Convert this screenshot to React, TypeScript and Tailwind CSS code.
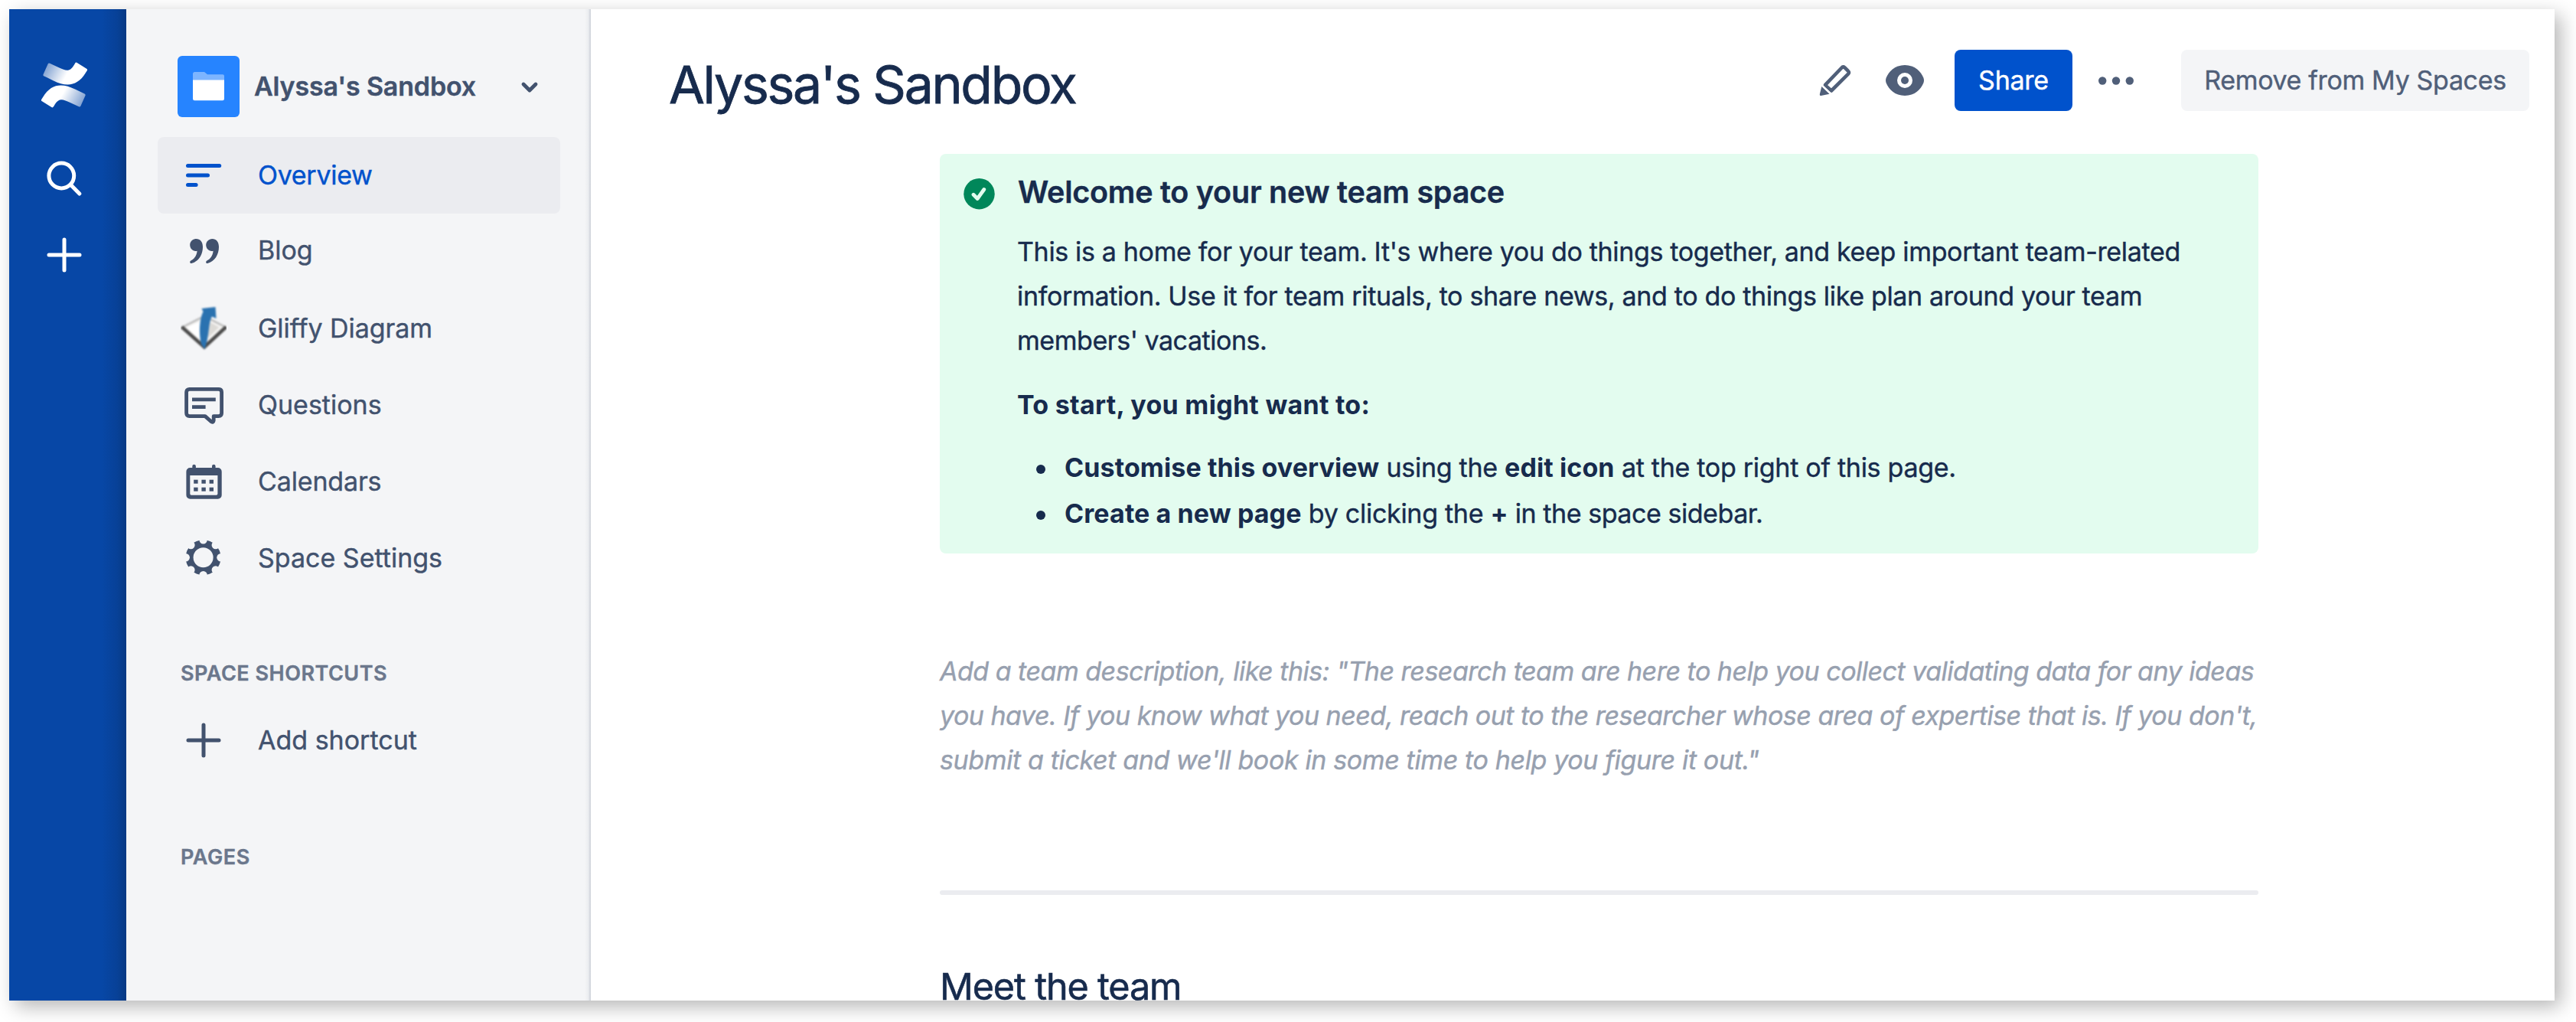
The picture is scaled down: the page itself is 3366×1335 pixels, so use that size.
import type { ReactNode } from "react";

function ConfluenceLogo() {
  return (
    <svg className="h-[60px] w-[60px]" viewBox="0 0 24 24">
      <defs>
        <linearGradient id="logo-low" gradientUnits="userSpaceOnUse" x1="23" y1="21" x2="12" y2="15">
          <stop offset="0" stopColor="#fff" stopOpacity="0.45" />
          <stop offset="1" stopColor="#fff" />
        </linearGradient>
        <linearGradient id="logo-high" gradientUnits="userSpaceOnUse" x1="1" y1="3" x2="12" y2="9">
          <stop offset="0" stopColor="#fff" stopOpacity="0.45" />
          <stop offset="1" stopColor="#fff" />
        </linearGradient>
      </defs>
      <path
        fill="url(#logo-low)"
        d="M.87 18.257c-.248.382-.53.875-.763 1.245a.764.764 0 0 0 .255 1.04l4.965 3.054a.764.764 0 0 0 1.058-.26c.199-.332.454-.763.733-1.221 1.967-3.247 3.945-2.853 7.508-1.146l4.957 2.337a.764.764 0 0 0 1.028-.382l2.364-5.346a.764.764 0 0 0-.382-1 599.851 599.851 0 0 1-4.965-2.361C10.911 10.97 5.224 11.185.87 18.257z"
      />
      <path
        fill="url(#logo-high)"
        d="M23.131 5.743c.249-.405.531-.875.764-1.25a.764.764 0 0 0-.256-1.034L18.675.404a.764.764 0 0 0-1.058.26c-.195.335-.451.763-.734 1.225-1.966 3.246-3.945 2.85-7.508 1.146L4.437.694a.764.764 0 0 0-1.027.382L1.046 6.422a.764.764 0 0 0 .382 1c1.039.49 3.105 1.467 4.965 2.361 6.698 3.246 12.392 3.029 16.738-4.04z"
      />
    </svg>
  );
}

function SearchIcon() {
  return (
    <svg className="h-[60px] w-[60px]" viewBox="0 0 60 60" fill="none" stroke="#fff" strokeWidth="5" strokeLinecap="round">
      <circle cx="26.3" cy="26.5" r="16.4" />
      <path d="M38.5 38.5 49.8 50" />
    </svg>
  );
}

function PlusIcon() {
  return (
    <svg className="h-[60px] w-[60px]" viewBox="0 0 60 60" fill="none" stroke="currentColor" strokeWidth="5" strokeLinecap="round">
      <path d="M30 10v40M10 30h40" />
    </svg>
  );
}

function OverviewIcon() {
  return (
    <svg className="h-[60px] w-[60px]" viewBox="0 0 60 60" fill="#0052CC">
      <rect x="7" y="15" width="46.2" height="5" rx="2.5" />
      <rect x="7" y="27.5" width="31" height="5" rx="2.5" />
      <rect x="7" y="40" width="15.6" height="5" rx="2.5" />
    </svg>
  );
}

function QuoteIcon() {
  const mark =
    "M20.4 15c-4.7 0-8.2 3.7-8.2 8.1 0 4.4 3.3 7.8 7.5 7.8.7 0 1.3-.1 1.9-.2-.6 6-3.4 10.6-8.3 12.7-1.8.9-1.3 3.9.9 3.6C23.6 44.6 29 35.6 29 25.5 29 19 25.4 15 20.4 15z";
  return (
    <svg className="h-[60px] w-[60px]" viewBox="0 0 60 60" fill="#42526E">
      <path d={mark} />
      <path d={mark} transform="translate(21 0)" />
    </svg>
  );
}

function GliffyIcon() {
  return (
    <svg className="h-[60px] w-[60px]" viewBox="0 0 60 60" fill="none">
      <g className="blur-[1.3px]">
        <path d="M2 28.5 31 14 59 28.5 31 54z" fill="#f3f2f0" stroke="#bdbdbd" strokeWidth="2.5" />
        <path d="M35 20 50 28.5 36 42z" fill="#dcdad6" />
        <path d="M1.5 28 31 54.5 59.5 28" stroke="#4b4b4b" strokeWidth="4.5" />
        <path d="M8 28.5 26 45V21z" fill="#fff" />
        <path d="M27.5 4 45.5 2 46.5 17 41 14.5C36 22 38 40 31.5 57L27 51C23.500 36 24.5 18 29.5 8z" fill="#2a72b0" />
      </g>
    </svg>
  );
}

function QuestionsIcon() {
  return (
    <svg className="h-[60px] w-[60px]" viewBox="0 0 60 60" fill="none" stroke="#42526E" strokeWidth="4.8" strokeLinejoin="round">
      <path d="M11.6 9.4H49.6Q53.6 9.4 53.6 13.4V40.6Q53.6 44.6 49.6 44.6H43.2V50.5Q42.8 53.4 40 51.7L32 44.6H11.6Q7.6 44.6 7.6 40.6V13.4Q7.6 9.4 11.6 9.4z" />
      <path d="M15 22.9h30.8M15 32.7h17.6" />
    </svg>
  );
}

function CalendarIcon() {
  return (
    <svg className="h-[60px] w-[60px]" viewBox="0 0 60 60" fill="#42526E">
      <rect x="15.3" y="7.7" width="4.6" height="12" rx="2.3" />
      <rect x="41" y="7.7" width="4.6" height="12" rx="2.3" />
      <path
        fillRule="evenodd"
        d="M12.4 12H48.7a5 5 0 0 1 5 5V47.7a5 5 0 0 1-5 5H12.4a5 5 0 0 1-5-5V17a5 5 0 0 1 5-5zM12.3 22V46a1.7 1.7 0 0 0 1.7 1.7H46.7a1.7 1.7 0 0 0 1.7-1.7V22z"
      />
      {[17.2, 27.4, 37.6].map((x) =>
        [27.7, 37.7].map((y) => <rect key={`${x}-${y}`} x={x} y={y} width="5.4" height="5" />),
      )}
    </svg>
  );
}

function GearIcon() {
  return (
    <svg className="h-[60px] w-[60px]" viewBox="0 0 60 60">
      <mask id="gear-mask">
        <circle cx="29.6" cy="29.2" r="23" fill="#fff" />
        <circle cx="29.6" cy="29.2" r="13" fill="#000" />
        {[0, 45, 90, 135, 180, 225, 270, 315].map((a) => (
          <circle key={a} cx="29.6" cy="6.3" r="5.2" fill="#000" transform={`rotate(${a} 29.6 29.2)`} />
        ))}
      </mask>
      <rect width="60" height="60" fill="#42526E" mask="url(#gear-mask)" />
    </svg>
  );
}

function NavItem({ icon, label, className = "" }: { icon: ReactNode; label: string; className?: string }) {
  return (
    <div className={`flex h-[100px] items-center gap-[41px] rounded-lg pl-[30px] ${className}`}>
      {icon}
      <span className="whitespace-nowrap">{label}</span>
    </div>
  );
}

function Sidebar() {
  return (
    <aside className="flex w-[607px] shrink-0 flex-col bg-[#F4F5F7] bg-[linear-gradient(to_left,rgba(9,30,66,0.16)_0,rgba(9,30,66,0.10)_2px,rgba(9,30,66,0.04)_3px,transparent_8px)] pr-10 pl-[41px] text-[34px] leading-[40px] text-[#42526E]">
      <div className="mt-[61px] flex h-20 items-center pl-[26px]">
        <div className="flex h-20 w-[81px] items-center justify-center rounded-md bg-[#2684FF]">
          <svg className="h-[38px] w-[41px]" viewBox="0 0 41 38">
            <path d="M2.5 0H15L19 3.3H39A2 2 0 0 1 41 5.3V14H0V2.5A2.5 2.5 0 0 1 2.5 0z" fill="#7DB5FF" />
            <path d="M0 10.5H41V35a2.2 2.2 0 0 1-2.2 2.2H2.2A2.2 2.2 0 0 1 0 35z" fill="#fff" />
          </svg>
        </div>
        <span className="ml-[19px] font-semibold tracking-[-0.17px] whitespace-nowrap">Alyssa's Sandbox</span>
        <svg className="mt-[2px] ml-[58px] h-6 w-6" viewBox="0 0 24 24" fill="none" stroke="#42526E" strokeWidth="4.8" strokeLinecap="round" strokeLinejoin="round">
          <path d="M4 8 12 16 20 8" />
        </svg>
      </div>
      <nav className="mt-[26px] flex flex-col">
        <NavItem icon={<OverviewIcon />} label="Overview" className="bg-[#EBECF0] tracking-[-0.3px] text-[#0052CC]" />
        <NavItem icon={<QuoteIcon />} label="Blog" className="-mt-[2px] mb-[2px]" />
        <NavItem icon={<GliffyIcon />} label="Gliffy Diagram" className="tracking-[-0.05px]" />
        <NavItem icon={<QuestionsIcon />} label="Questions" />
        <NavItem icon={<CalendarIcon />} label="Calendars" className="tracking-[-0.15px]" />
        <NavItem icon={<GearIcon />} label="Space Settings" />
      </nav>
      <h2 className="mt-[81px] pl-[30px] text-[27px] font-semibold tracking-[0.5px] text-[#6B778C]">SPACE SHORTCUTS</h2>
      <NavItem icon={<PlusIcon />} label="Add shortcut" className="mt-[17px]" />
      <h2 className="mt-[83px] pl-[30px] text-[27px] font-semibold tracking-[0.6px] text-[#6B778C]">PAGES</h2>
    </aside>
  );
}

function Header() {
  return (
    <header className="flex h-[186px] items-center justify-between pr-[33px] pl-[102px]">
      <h1 className="mt-[9px] text-[68px] leading-[80px] tracking-[-2.33px] whitespace-nowrap [-webkit-text-stroke:0.8px]">Alyssa's Sandbox</h1>
      <div className="flex items-center text-[34px] text-[#505F79]">
        <svg className="h-[42px] w-[42px]" viewBox="0 0 42 42" fill="none">
          <path d="M7.8 27.2 29.5 4.5Q31.3 2.4 33.3 4.2L37.8 8.7Q40 10.7 38 12.7L16 34.500z" stroke="#505F79" strokeWidth="4.6" strokeLinejoin="round" />
          <path d="M3.3 29 13.5 38.7 2.5 41Q.5 41.5.8 39z" fill="#505F79" />
          <path d="M4 27.5 15.5 38.5" stroke="#fff" strokeWidth="2" />
        </svg>
        <svg className="ml-[45px] h-10 w-[50px]" viewBox="0 0 50 40" fill="#505F79">
          <path d="M25 0C38 0 46 8.5 49.3 16.5Q50.7 20 49.3 23.5C46 31.5 38 40 25 40S4 31.5.7 23.5Q-.7 20 .7 16.5C4 8.5 12 0 25 0z" />
          <circle cx="25" cy="20" r="10" fill="#fff" />
          <circle cx="25" cy="20" r="5" />
        </svg>
        <button className="ml-10 h-20 w-[154px] rounded-lg bg-[#0052CC] pb-[2px] tracking-[-0.24px] text-white">Share</button>
        <svg className="ml-[34px] h-[11px] w-[46px]" viewBox="0 0 46 11" fill="#505F79">
          <circle cx="5.2" cy="5.5" r="5.2" />
          <circle cx="23" cy="5.5" r="5.2" />
          <circle cx="40.8" cy="5.5" r="5.2" />
        </svg>
        <button className="ml-[62px] h-20 w-[455px] rounded-lg bg-[#F4F5F7] pb-[2px] tracking-[-0.35px]">Remove from My Spaces</button>
      </div>
    </header>
  );
}

function Bold({ children }: { children: ReactNode }) {
  return <b className="font-bold tracking-[0.1px] [-webkit-text-stroke:0]">{children}</b>;
}

function Bullet({ children }: { children: ReactNode }) {
  return (
    <li className="flex h-[58px] items-center">
      <span className="mt-1 mr-[25px] ml-[25px] h-3 w-3 rounded-full bg-[#172B4D]" />
      <span className="tracking-[-0.28px] whitespace-pre">{children}</span>
    </li>
  );
}

function WelcomePanel() {
  return (
    <section className="flex h-[522px] gap-[29px] rounded-lg bg-[#E3FCEF] pt-[25px] pl-[31px]">
      <svg className="mt-[7px] h-[41px] w-[41px]" viewBox="0 0 41 41">
        <circle cx="20.5" cy="20.2" r="20.2" fill="#00875A" />
        <path d="M13 21.2 18.2 26.5 26.8 14.5" fill="none" stroke="#E3FCEF" strokeWidth="4.8" strokeLinecap="round" strokeLinejoin="round" />
      </svg>
      <div className="text-[34px] leading-[58px]">
        <h3 className="pl-px text-[39.5px] leading-[50px] font-semibold tracking-[-0.24px] whitespace-nowrap">Welcome to your new team space</h3>
        <p className="mt-6 tracking-[-0.335px] whitespace-nowrap">
          This is a home for your team. It's where you do things together, and keep important team-related
          <br />
          information. Use it for team rituals, to share news, and to do things like plan around your team
          <br />
          <span className="tracking-[-0.45px]">members' vacations.</span>
        </p>
        <p className="mt-[26px] font-bold tracking-[0.27px] [-webkit-text-stroke:0]">To start, you might want to:</p>
        <ul className="mt-6 flex flex-col gap-[2px]">
          <Bullet>
            <Bold>Customise this overview</Bold> using the <Bold>edit icon</Bold> at the top right of this page.
          </Bullet>
          <Bullet>
            <Bold>Create a new page</Bold> by clicking the <Bold>+</Bold>
            <span className="tracking-[-0.45px]"> in the space sidebar.</span>
          </Bullet>
        </ul>
      </div>
    </section>
  );
}

export default function App() {
  return (
    <div className="h-[1335px] w-[3366px] overflow-hidden bg-white pt-3 pl-3 font-['Inter',sans-serif] text-[#172B4D] [-webkit-text-stroke:0.4px]">
      <div className="h-[1295px] w-[3326px] shadow-[8px_8px_24px_rgba(0,0,0,0.29)]">
        <div className="flex h-full overflow-hidden bg-white">
          <div className="flex w-[153px] shrink-0 flex-col items-center bg-[#0747A6] bg-[linear-gradient(to_left,rgba(9,30,66,0.34)_0,rgba(9,30,66,0.15)_12px,transparent_32px)] pt-[69px] pr-[9px] text-white">
            <ConfluenceLogo />
            <div className="mt-[62px]"><SearchIcon /></div>
            <div className="mt-10"><PlusIcon /></div>
          </div>
          <Sidebar />
          <main className="flex-1">
            <Header />
            <div className="mt-[3px] ml-[456px] w-[1723px]">
              <WelcomePanel />
              <p className="mt-[125px] text-[34px] leading-[58px] whitespace-nowrap text-[#97A0AF] italic">
                <span className="tracking-[-0.5px]">Add a team description, like this: "The research team are here to help you collect validating data for any ideas</span>
                <br />
                <span className="tracking-[-0.505px]">you have. If you know what you need, reach out to the researcher whose area of expertise that is. If you don't,</span>
                <br />
                <span className="tracking-[-0.37px]">submit a ticket and we'll book in some time to help you figure it out."</span>
              </p>
              <hr className="mt-[141px] h-[6px] rounded-sm border-0 bg-[#EBECF0]" />
              <h2 className="mt-[90px] text-[48.5px] leading-[60px] tracking-[-1.14px] whitespace-nowrap [-webkit-text-stroke:0.6px]">Meet the team</h2>
            </div>
          </main>
        </div>
      </div>
    </div>
  );
}
